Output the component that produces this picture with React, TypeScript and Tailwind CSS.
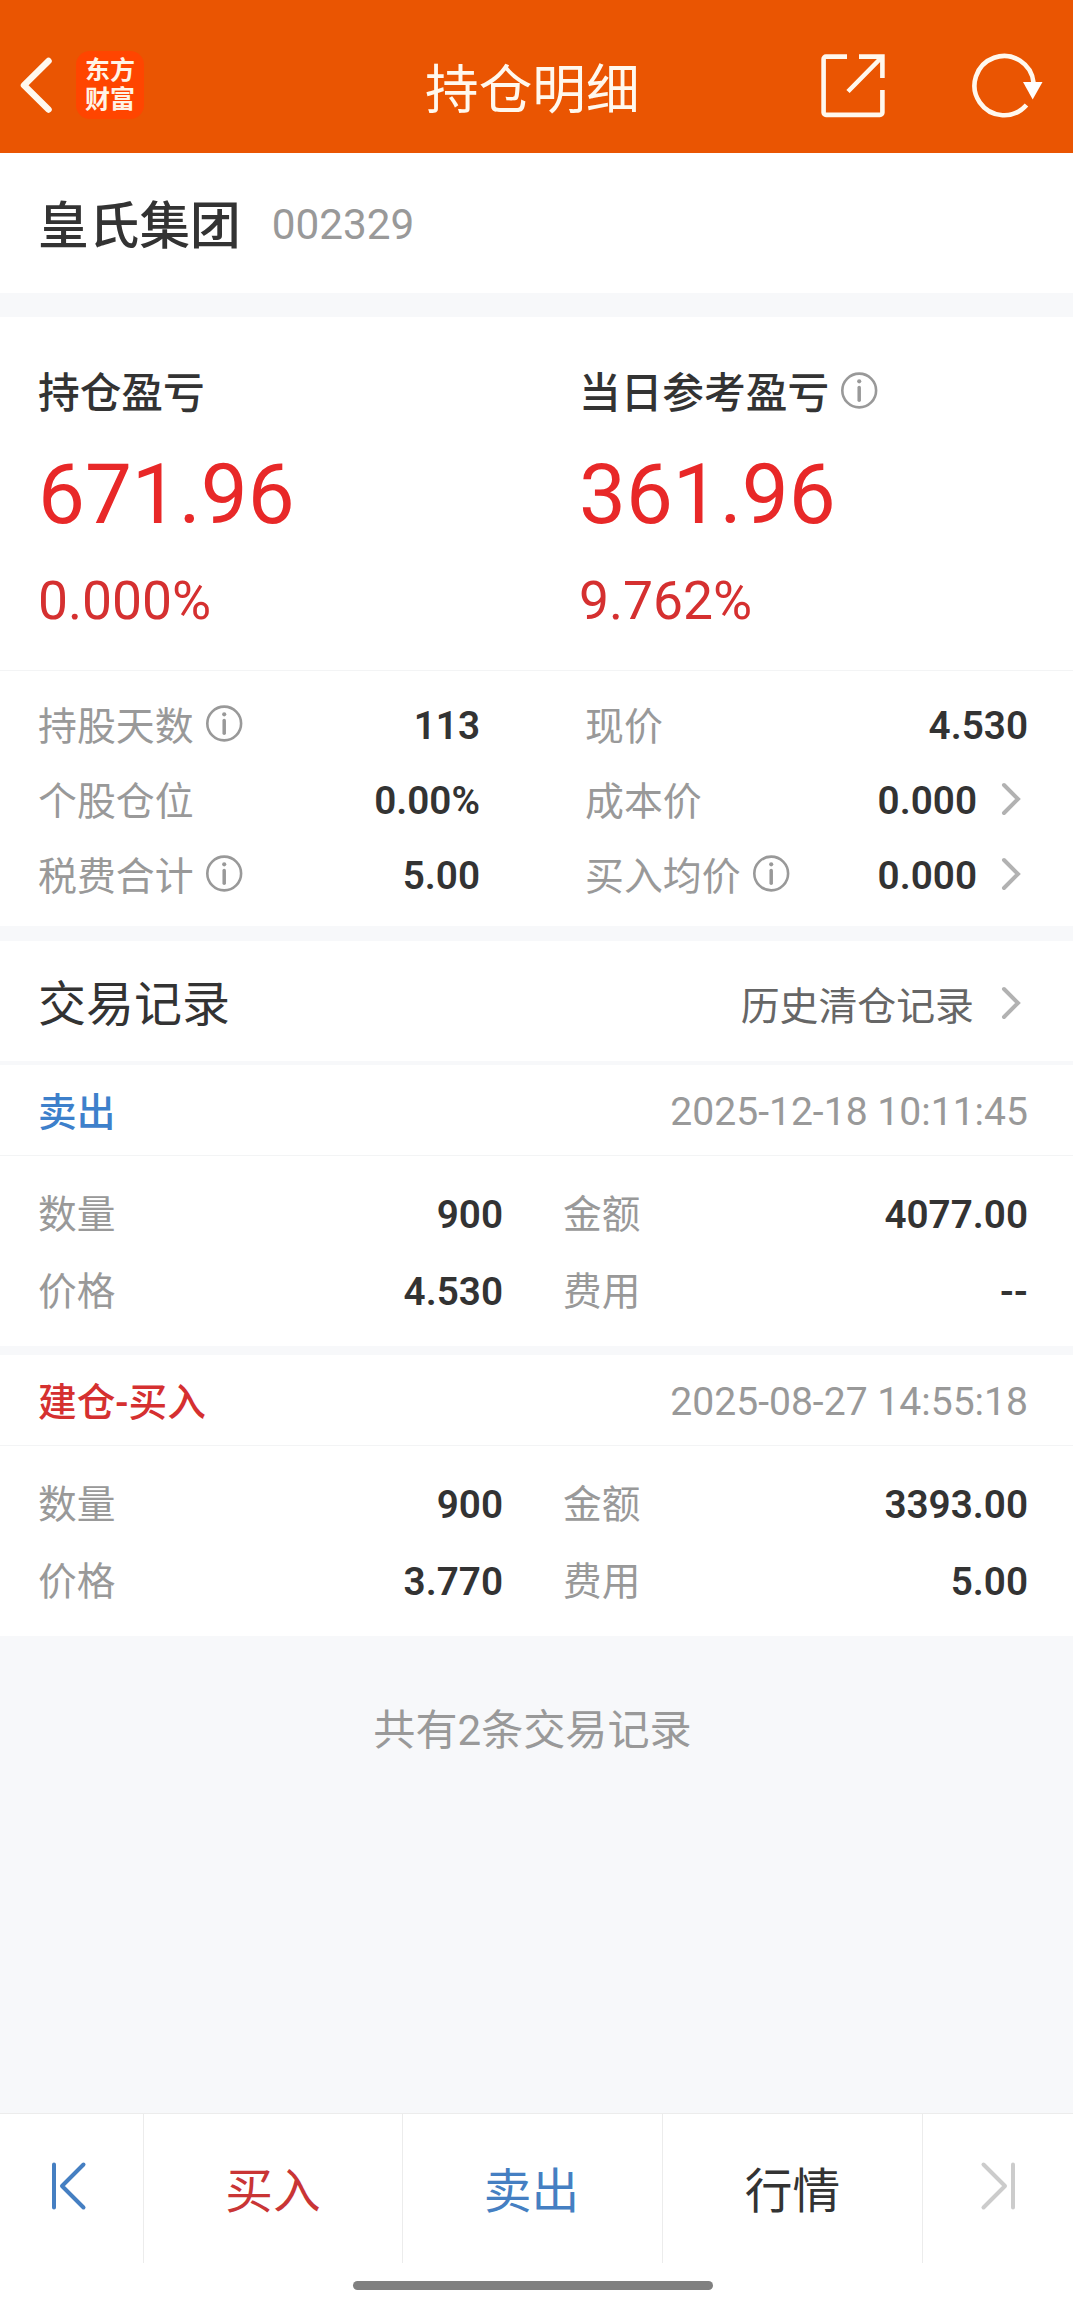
import type { ReactNode } from "react";
import clsx from "clsx";

type Trade = {
  side: "buy" | "sell";
  title: string;
  time: string;
  quantity: string;
  amount: string;
  price: string;
  fee: string;
};

const trades: Trade[] = [
  {
    side: "sell",
    title: "卖出",
    time: "2025-12-18 10:11:45",
    quantity: "900",
    amount: "4077.00",
    price: "4.530",
    fee: "--",
  },
  {
    side: "buy",
    title: "建仓-买入",
    time: "2025-08-27 14:55:18",
    quantity: "900",
    amount: "3393.00",
    price: "3.770",
    fee: "5.00",
  },
];

function InfoIcon() {
  return (
    <svg width="37" height="37" viewBox="0 0 37 37" fill="none" className="-mt-1.5 shrink-0 text-[#999]">
      <circle cx="18.2" cy="18.5" r="16.9" stroke="currentColor" strokeWidth="2.6" />
      <circle cx="18.2" cy="9.3" r="2.1" fill="currentColor" />
      <path d="M18.2 15.6v12.6" stroke="currentColor" strokeWidth="3.5" strokeLinecap="round" />
    </svg>
  );
}

function Chevron() {
  return (
    <svg width="20" height="34" viewBox="0 0 20 34" fill="none" className="shrink-0">
      <path d="M3 3l14 14L3 31" stroke="#b2b2b2" strokeWidth="4" strokeLinecap="round" />
    </svg>
  );
}

function Header() {
  return (
    <header className="flex h-[153px] items-start bg-[#ea5502] pt-[51px]">
      <div className="flex w-[425px] items-center">
        <svg width="34" height="58" viewBox="0 0 34 58" fill="none" className="ml-[19px]">
          <path d="M29.5 5L5 29.2 29.5 53.5" stroke="#fff8ee" strokeWidth="6.5" strokeLinecap="round" strokeLinejoin="round" />
        </svg>
        <div className="ml-[23px] flex h-[68px] w-[68px] flex-col items-center justify-center rounded-[14px] bg-[#ff4500] text-[25px] leading-[29px] font-bold text-[#fff4e6]">
          <span>东方</span>
          <span>财富</span>
        </div>
      </div>
      <h1 className="mt-[5px] flex-1 text-[53.65px] leading-[70px] text-[#fff8ee]">持仓明细</h1>
      <svg width="64" height="64" viewBox="0 0 64 64" fill="none" stroke="#fff8ee" strokeWidth="4.6" className="mt-[3px]">
        <path d="M26 2.6H5a2.4 2.4 0 0 0-2.4 2.4v53.5a2.4 2.4 0 0 0 2.4 2.4h54a2.4 2.4 0 0 0 2.4-2.4V36" />
        <path d="M38 2.6h23.4V24M60 4L27 37.5" />
      </svg>
      <svg width="74" height="68" viewBox="0 0 74 68" fill="none" className="mr-[29px] ml-[85px]">
        <path d="M56.5 54A29.6 29.6 0 1 1 63.6 32" stroke="#fff8ee" strokeWidth="4.6" />
        <path d="M53 31h19.5L62.7 48.5z" fill="#fff" />
      </svg>
    </header>
  );
}

function ProfitColumn({ label, amount, percent, info }: { label: string; amount: string; percent: string; info?: boolean }) {
  return (
    <div>
      <div className="flex h-[42px] items-center gap-[12px] text-[41.7px] font-medium text-[#333]">
        <span className="pt-[2px]">{label}</span>
        {info && <InfoIcon />}
      </div>
      <div className="mt-[39px] text-[83.5px] leading-[84px] text-[#e82828]">{amount}</div>
      <div className="mt-[37px] text-[53.4px] leading-[54px] text-[#d53030]">{percent}</div>
    </div>
  );
}

function StatRow({ label, value, info, link }: { label: string; value: string; info?: boolean; link?: boolean }) {
  return (
    <div className="flex h-[75px] items-center">
      <span className="mr-[12px] pt-[1px] text-[38.9px] text-[#999]">{label}</span>
      {info && <InfoIcon />}
      <span className="ml-auto font-semibold text-[#333]">{value}</span>
      {link && (
        <span className="mr-[7px] -mt-[5px] ml-[24px]">
          <Chevron />
        </span>
      )}
    </div>
  );
}

function Field({ label, value }: { label: string; value: string }) {
  return (
    <div className="flex h-[77px] items-center justify-between">
      <span className="pt-[1px] text-[#999]">{label}</span>
      <span className="font-semibold text-[#333]">{value}</span>
    </div>
  );
}

function TradeCard({ trade }: { trade: Trade }) {
  return (
    <article className="bg-white text-[38.7px] leading-[46px]">
      <div className="flex h-[91px] items-center justify-between border-b border-[#f3f4f5] pt-[5px] pr-[45px] pl-[38px]">
        <span className={clsx("font-medium", trade.side === "sell" ? "text-[#3d80cb]" : "text-[#d53030]")}>
          {trade.title}
        </span>
        <span className="-mt-[2px] text-[39.1px] text-[#999]">{trade.time}</span>
      </div>
      <div className="grid grid-cols-[465px_465px] gap-x-[60px] pt-[20px] pb-[16px] pl-[38px]">
        <Field label="数量" value={trade.quantity} />
        <Field label="金额" value={trade.amount} />
        <Field label="价格" value={trade.price} />
        <Field label="费用" value={trade.fee} />
      </div>
    </article>
  );
}

function TabText({ className, children }: { className: string; children: ReactNode }) {
  return (
    <button className={clsx("flex items-center justify-center border-l border-[#ececec] pt-[8px] text-[47.7px]", className)}>
      {children}
    </button>
  );
}

function BottomBar() {
  return (
    <footer className="h-[198px] border-t border-[#ececec] bg-white">
      <div className="grid h-[149px] grid-cols-[143px_259px_260px_260px_151px]">
        <div className="flex items-center justify-center pr-[6px] pb-[5px]">
          <svg width="36" height="50" viewBox="0 0 36 50" fill="none" stroke="#457fc2" strokeWidth="4" strokeLinecap="round" strokeLinejoin="round">
            <path d="M3 3.5v43M32.5 3.5L11 25l21.5 21.5" />
          </svg>
        </div>
        <TabText className="text-[#c93535]">买入</TabText>
        <TabText className="pr-[2px] text-[#457fc2]">卖出</TabText>
        <TabText className="text-[#333]">行情</TabText>
        <div className="flex items-center justify-center border-l border-[#ececec] pb-[5px]">
          <svg width="36" height="50" viewBox="0 0 36 50" fill="none" stroke="#ccc" strokeWidth="4" strokeLinecap="round" strokeLinejoin="round">
            <path d="M33 3.5v43M3.5 3.5L25 25 3.5 46.5" />
          </svg>
        </div>
      </div>
      <div className="mt-[18px] ml-[353px] h-[9px] w-[360px] rounded-full bg-[#808080]" />
    </footer>
  );
}

export default function App() {
  return (
    <div className="flex h-[2311px] w-[1073px] flex-col bg-[#f7f8fa] font-[Roboto,'Noto_Sans_CJK_SC',sans-serif]">
      <Header />

      <section className="flex h-[140px] items-center bg-white pl-[38px]">
        <span className="pt-[9px] text-[50.7px] font-medium text-[#333]">皇氏集团</span>
        <span className="ml-[31px] pt-[4px] text-[42.3px] text-[#999]">002329</span>
      </section>

      <section className="mt-[24px] bg-white">
        <div className="grid h-[354px] grid-cols-[541px_1fr] border-b border-[#f3f4f5] pt-[55px] pl-[38px]">
          <ProfitColumn label="持仓盈亏" amount="671.96" percent="0.000%" />
          <ProfitColumn label="当日参考盈亏" amount="361.96" percent="9.762%" info />
        </div>
        <div className="grid grid-cols-[442px_443px] gap-x-[105px] pt-[18px] pb-[12px] pl-[38px] text-[38.7px]">
          <StatRow label="持股天数" value="113" info />
          <StatRow label="现价" value="4.530" />
          <StatRow label="个股仓位" value="0.00%" />
          <StatRow label="成本价" value="0.000" link />
          <StatRow label="税费合计" value="5.00" info />
          <StatRow label="买入均价" value="0.000" info link />
        </div>
      </section>

      <section className="mt-[15px]">
        <div className="flex h-[120px] items-center bg-white pr-[52px] pl-[38px]">
          <h2 className="pt-[7px] text-[48px] text-[#333]">交易记录</h2>
          <span className="mr-[27px] ml-auto pt-[12px] text-[38.9px] text-[#666]">历史清仓记录</span>
          <span className="pt-[3px]">
            <Chevron />
          </span>
        </div>
        <div className="mt-[4px] flex flex-col gap-[9px]">
          {trades.map((t) => (
            <TradeCard key={t.time} trade={t} />
          ))}
        </div>
      </section>

      <p className="mt-[65px] pr-[8px] text-center text-[42.1px] leading-[60px] text-[#999]">共有2条交易记录</p>

      <div className="flex-1" />
      <BottomBar />
    </div>
  );
}
